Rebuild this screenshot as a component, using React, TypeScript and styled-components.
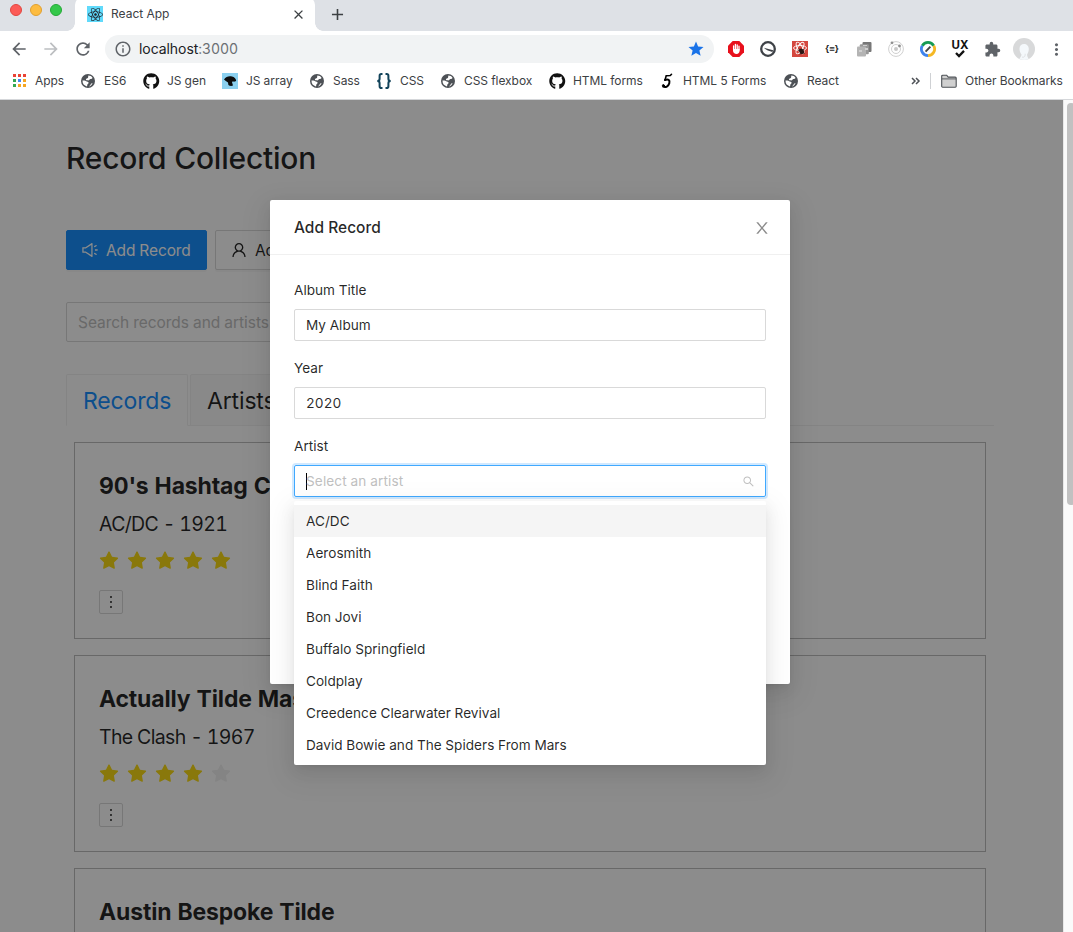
import React from 'react';
import styled, { createGlobalStyle } from 'styled-components';
import {
  MdAdd, MdArrowBack, MdArrowForward, MdClose, MdExtension, MdInfoOutline,
  MdMoreVert, MdRefresh, MdStar,
} from 'react-icons/md';
import { FaGithub, FaReact } from 'react-icons/fa';
import {
  AiFillStar, AiOutlineMore, AiOutlineSearch, AiOutlineSound, AiOutlineUser,
} from 'react-icons/ai';

const GlobalStyle = createGlobalStyle`
  *, *::before, *::after { box-sizing: border-box; }
  body {
    margin: 0;
    overflow: hidden;
    background: #fff;
    font-family: Inter, "Liberation Sans", sans-serif;
    font-variant-numeric: tabular-nums;
    color: rgba(0, 0, 0, 0.85);
  }
  h1, h2, p { margin: 0; }
  svg { display: block; flex: none; }
`;

const Window = styled.div`
  width: 1073px;
  height: 932px;
  display: flex;
  flex-direction: column;
  overflow: hidden;
`;

/* ---------- browser chrome ---------- */

const TabStrip = styled.div`
  height: 31px;
  flex: none;
  display: flex;
  background: #dee1e6;
  overflow: hidden;
`;

const Lights = styled.div`
  width: 75px;
  padding: 4px 0 0 10px;
  display: flex;
  gap: 8px;
`;

const Light = styled.span<{ $fill: string; $edge: string }>`
  width: 12px;
  height: 12px;
  border-radius: 50%;
  background: ${(p) => p.$fill};
  border: 1px solid ${(p) => p.$edge};
`;

const BrowserTab = styled.div`
  position: relative;
  width: 240px;
  height: 34px;
  margin-top: -3px;
  padding: 0 9px 0 12px;
  display: flex;
  align-items: center;
  background: #fff;
  border-radius: 8px 8px 0 0;
  font-size: 12px;
  color: #3c4043;

  &::before, &::after {
    content: "";
    position: absolute;
    bottom: 0;
    width: 8px;
    height: 8px;
  }
  &::before {
    left: -8px;
    background: radial-gradient(circle at 0 0, transparent 7.5px, #fff 8px);
  }
  &::after {
    right: -8px;
    background: radial-gradient(circle at 100% 0, transparent 7.5px, #fff 8px);
  }
`;

const Favicon = styled.span`
  width: 16px;
  height: 16px;
  margin-right: 8px;
  display: grid;
  place-items: center;
  background: #61dafb;
  color: #20232a;
`;

const TabTitle = styled.span`
  flex: 1;
  padding-bottom: 2px;
  letter-spacing: 0;
`;

const NewTab = styled.div`
  padding: 5px 0 0 13px;
  color: #3c4043;
`;

const Toolbar = styled.div`
  height: 36px;
  flex: none;
  display: flex;
  align-items: center;
  background: #fff;
  color: #5f6368;
`;

const NavButtons = styled.div`
  width: 105px;
  padding-left: 9px;
  display: flex;
  gap: 12px;
`;

const Faded = styled.span`
  color: #bcbec1;
`;

const AddressBar = styled.div`
  width: 609px;
  height: 28px;
  padding: 0 9px;
  display: flex;
  align-items: center;
  border-radius: 14px;
  background: #f1f3f4;
  font-size: 14px;
  letter-spacing: -0.06px;
`;

const Url = styled.span`
  flex: 1;
  padding: 0 0 1px 7px;
  color: #202124;
`;

const Port = styled.span`
  color: #6b6f73;
`;

const Extensions = styled.div`
  padding-left: 6px;
  display: flex;
`;

const Extension = styled.span`
  width: 32px;
  height: 28px;
  display: grid;
  place-items: center;
`;

const UxMark = styled.span`
  display: flex;
  flex-direction: column;
  align-items: center;
  font-size: 11.5px;
  font-weight: 700;
  line-height: 9px;
  color: #111;
`;

const Braces = styled.span<{ $size: number; $color: string }>`
  font-size: ${(p) => p.$size}px;
  font-weight: 700;
  line-height: 1;
  white-space: nowrap;
  color: ${(p) => p.$color};
`;

const Bookmarks = styled.div`
  height: 33px;
  flex: none;
  padding-left: 11px;
  padding-bottom: 5px;
  display: flex;
  align-items: center;
  background: #fff;
  border-bottom: 1px solid #d5d7da;
  font-size: 12px;
  color: #3c4043;
`;

const Bookmark = styled.span<{ $width?: number }>`
  width: ${(p) => (p.$width ? `${p.$width}px` : 'auto')};
  display: flex;
  align-items: center;
  gap: 8px;
  white-space: nowrap;
  letter-spacing: -0.05px;
`;

const BookmarkIcon = styled.span`
  width: 16px;
  height: 16px;
  display: grid;
  place-items: center;
  color: #4d5156;
`;

const AppsGrid = styled.span`
  display: grid;
  grid-template-columns: repeat(3, 3px);
  gap: 2px;
`;

const AppDot = styled.i<{ $color: string }>`
  height: 3px;
  background: ${(p) => p.$color};
`;

const Divider = styled.span`
  width: 1px;
  height: 16px;
  margin: 0 10px 0 9px;
  background: #cfd1d4;
`;

/* ---------- page ---------- */

const Viewport = styled.div`
  flex: 1;
  min-height: 0;
  display: flex;
`;

const Page = styled.div`
  position: relative;
  flex: 1;
  min-width: 0;
  overflow: hidden;
`;

const ScrollTrack = styled.div`
  width: 10px;
  padding: 3px 0 0 3px;
  background: #fafafa;
  border-left: 1px solid #e8e8e8;
  overflow: hidden;
`;

const ScrollThumb = styled.div`
  width: 8px;
  height: 402px;
  border-radius: 4px;
  background: #c1c1c1;
`;

const Content = styled.main`
  width: 1060px;
  padding: 34px 66px 0;
`;

const PageTitle = styled.h1`
  height: 96px;
  font-size: 30px;
  line-height: 48px;
  font-weight: 500;
  letter-spacing: -0.22px;
`;

const Actions = styled.div`
  display: flex;
  gap: 8px;
`;

const ActionButton = styled.button<{ $primary?: boolean }>`
  width: 141px;
  height: 40px;
  padding: 0 14px;
  display: flex;
  align-items: center;
  gap: 7px;
  border: 1px solid ${(p) => (p.$primary ? '#1890ff' : '#d9d9d9')};
  border-radius: 2px;
  background: ${(p) => (p.$primary ? '#1890ff' : '#fff')};
  color: ${(p) => (p.$primary ? '#fff' : 'rgba(0,0,0,.85)')};
  box-shadow: 0 2px 0 rgba(0, 0, 0, 0.03);
  font: inherit;
  font-size: 15.5px;
  letter-spacing: -0.12px;
  white-space: nowrap;
`;

const SearchBox = styled.div`
  width: 400px;
  height: 40px;
  margin-top: 32px;
  padding: 0 11px;
  border: 1px solid #d9d9d9;
  border-radius: 2px;
  font-size: 15.5px;
  line-height: 40px;
  letter-spacing: -0.05px;
  color: #bfbfbf;
`;

const Tabs = styled.div`
  height: 52px;
  margin-top: 32px;
  display: flex;
  gap: 2px;
  box-shadow: inset 0 -1px #f0f0f0;
`;

const Tab = styled.div<{ $active?: boolean }>`
  padding: 0 16px;
  width: 122px;
  border: 1px solid #f0f0f0;
  border-bottom-color: ${(p) => (p.$active ? '#fff' : '#f0f0f0')};
  border-radius: 2px 2px 0 0;
  background: ${(p) => (p.$active ? '#fff' : '#fafafa')};
  color: ${(p) => (p.$active ? '#1890ff' : 'rgba(0,0,0,.85)')};
  font-size: 23px;
  line-height: 52px;
  letter-spacing: -0.15px;
`;

const Cards = styled.div`
  padding: 16px 8px 0;
  display: flex;
  flex-direction: column;
  gap: 16px;
`;

const Card = styled.article`
  height: 197px;
  padding: 24px;
  border: 1px solid #bdbdbd;
`;

const CardTitle = styled.h2`
  font-size: 23px;
  line-height: 38px;
  font-weight: 700;
  letter-spacing: -0.16px;
  white-space: nowrap;
`;

const CardSubtitle = styled.p`
  font-size: 19.5px;
  line-height: 38px;
  letter-spacing: -0.65px;
`;

const Stars = styled.div`
  height: 47px;
  padding-top: 8px;
  display: flex;
  gap: 8px;
`;

const StarSlot = styled.span<{ $on: boolean }>`
  width: 20px;
  height: 20px;
  display: flex;
  align-items: center;
  justify-content: center;
  color: ${(p) => (p.$on ? '#fadb14' : '#f0f0f0')};
`;

const MoreButton = styled.button`
  width: 24px;
  height: 24px;
  padding: 0;
  display: flex;
  align-items: center;
  justify-content: center;
  border: 1px solid #d9d9d9;
  border-radius: 2px;
  background: #fff;
  color: rgba(0, 0, 0, 0.85);
`;

/* ---------- dialog ---------- */

const floatShadow = `
  0 3px 6px -4px rgba(0,0,0,.12),
  0 6px 16px 0 rgba(0,0,0,.08),
  0 9px 28px 8px rgba(0,0,0,.05)`;

const Mask = styled.div`
  position: absolute;
  inset: 0;
  padding: 100px 3px 0 0;
  display: flex;
  justify-content: center;
  align-items: flex-start;
  background: rgba(0, 0, 0, 0.45);
`;

const Dialog = styled.section`
  width: 520px;
  height: 484px;
  background: #fff;
  border-radius: 2px;
  box-shadow: ${floatShadow};
`;

const DialogHeader = styled.header`
  height: 55px;
  padding: 0 19px 0 24px;
  display: flex;
  align-items: center;
  justify-content: space-between;
  border-bottom: 1px solid #f0f0f0;
  font-size: 15.5px;
  font-weight: 500;
`;

const CloseIcon = styled.span`
  padding-top: 2px;
  color: #8c8c8c;
`;

const Form = styled.form`
  padding: 24px;
  display: flex;
  flex-direction: column;
  gap: 16px;
  font-size: 13.6px;
  letter-spacing: 0.02px;
`;

const Field = styled.div`
  position: relative;
  display: flex;
  flex-direction: column;
`;

const Label = styled.label`
  height: 30px;
  line-height: 23px;
`;

const Control = styled.div<{ $focused?: boolean }>`
  height: 32px;
  padding: 0 10px 0 11px;
  display: flex;
  align-items: center;
  border: 1px solid ${(p) => (p.$focused ? '#40a9ff' : '#d9d9d9')};
  border-radius: 2px;
  box-shadow: ${(p) => (p.$focused ? '0 0 0 2px rgba(24,144,255,.2)' : 'none')};
`;

const Caret = styled.span`
  width: 1px;
  height: 17px;
  margin-right: -1px;
  background: #000;
`;

const Placeholder = styled.span`
  flex: 1;
  letter-spacing: 0.12px;
  color: #bfbfbf;
`;

const SearchGlyph = styled.span`
  padding-top: 1px;
  color: #bfbfbf;
`;

const Menu = styled.ul`
  position: absolute;
  top: 66px;
  left: 0;
  width: 472px;
  margin: 0;
  padding: 4px 0;
  list-style: none;
  background: #fff;
  border-radius: 2px;
  box-shadow: ${floatShadow};
`;

const Option = styled.li<{ $active?: boolean }>`
  height: 32px;
  padding: 0 12px;
  line-height: 32px;
  background: ${(p) => (p.$active ? '#f5f5f5' : 'transparent')};
`;

const CloseGlyph = () => (
  <svg width="18" height="18" viewBox="0 0 1024 1024" fill="currentColor">
    <path d="M563.8 512l262.5-312.900c4.400-5.200.7-13.100-6.100-13.100h-79.800c-4.700 0-9.200 2.100-12.300 5.700L511.600 449.800 295.100 191.700c-3-3.600-7.500-5.700-12.300-5.700H203c-6.800 0-10.500 7.900-6.100 13.100L459.400 512 196.900 824.900A7.950 7.950 0 0 0 203 838h79.800c4.700 0 9.200-2.100 12.300-5.700l216.500-258.100 216.500 258.100c3 3.600 7.500 5.700 12.300 5.700h79.800c6.800 0 10.500-7.900 6.100-13.100L563.800 512z" />
  </svg>
);

const StopHandIcon = () => (
  <svg width="16" height="16" viewBox="0 0 16 16">
    <path d="M4.7 0h6.6L16 4.7v6.6L11.3 16H4.7L0 11.3V4.7z" fill="#e8101c" />
    <path d="M5.6 8.8V4.9M7.4 8V3.5M9.2 8V3.8M11 9V5.2" stroke="#fff" strokeWidth="1.3" strokeLinecap="round" />
    <path d="M5 8h6.6v1.8c0 2-1.2 3.2-3 3.2C6.500 13 5 11.600 5 9.800z" fill="#fff" />
  </svg>
);

const DialIcon = () => (
  <svg width="16" height="16" viewBox="0 0 16 16" fill="none">
    <circle cx="8" cy="8" r="6.800" stroke="#3e4247" strokeWidth="2.300" />
    <path d="M3.800 6.800l9.400 2.400-.8 1.700C9.500 10.500 6 9 3.800 6.800z" fill="#3e4247" />
  </svg>
);

const RedReactIcon = () => (
  <svg width="16" height="16" viewBox="0 0 16 16">
    <path d="M0 0h16v16H0z" fill="#d4473e" />
    <g fill="none" stroke="#fff" strokeWidth="0.9">
      <ellipse cx="8" cy="7" rx="6.500" ry="2.500" />
      <ellipse cx="8" cy="7" rx="6.500" ry="2.500" transform="rotate(60 8 7)" />
      <ellipse cx="8" cy="7" rx="6.500" ry="2.500" transform="rotate(120 8 7)" />
    </g>
    <ellipse cx="9.600" cy="10.300" rx="2.300" ry="2.900" fill="#2a1613" transform="rotate(-30 9.600 10.300)" />
    <path d="M6 9l6.500 3.500M8 13.500l4-5.500M7 7.500l1.500 1.500" stroke="#2a1613" strokeWidth="0.9" />
  </svg>
);

const StackIcon = () => (
  <svg width="16" height="16" viewBox="0 0 16 16">
    <rect x="6.500" y="1" width="9" height="10" rx="1" fill="#777" />
    <rect x="3.800" y="3.200" width="9" height="10" rx="1" fill="#989898" />
    <rect x="1" y="5.500" width="9" height="10" rx="1" fill="#b4b4b4" />
    <path d="M3 9h3v2H3zM7 4h4v1H7zM9 7h3v2H9z" fill="#d0d0d0" />
  </svg>
);

const OrbitIcon = () => (
  <svg width="16" height="16" viewBox="0 0 16 16" fill="none">
    <circle cx="8" cy="8" r="7.400" stroke="#d0d0d0" strokeWidth="1" />
    <circle cx="8" cy="8" r="4.500" stroke="#d0d0d0" strokeWidth="1" />
    <circle cx="8" cy="8" r="2" fill="#c8c8c8" />
    <circle cx="4" cy="1.800" r="1.400" fill="#909090" />
    <circle cx="11.500" cy="5" r="1.400" fill="#8c8c8c" />
  </svg>
);

const RingPencilIcon = () => (
  <svg width="16" height="16" viewBox="0 0 16 16" fill="none" strokeWidth="2.800">
    <path d="M2.300 4.700a6.600 6.600 0 0 1 11.400 0" stroke="#169b54" />
    <path d="M13.700 4.700A6.600 6.600 0 0 1 8 14.600" stroke="#f5b824" />
    <path d="M8 14.600A6.600 6.600 0 0 1 2.300 4.700" stroke="#3f83ec" />
    <path d="M5.600 10.600l4.800-5" stroke="#444" strokeWidth="2" />
  </svg>
);

const AvatarIcon = () => (
  <svg width="22" height="22" viewBox="0 0 22 22">
    <circle cx="11" cy="11" r="11" fill="#d8d9da" />
    <path d="M6.500 20.800c1-2 2-2.800 2-4.300-1.300-1.500-2-3.600-2-5.700C6.500 7.800 8.300 6 11 6s4.800 2 4.800 5c0 2.200-.8 4.200-1.700 5.400 0 1.600.6 2.800 1.600 4.500a11 11 0 0 1-9.200 0z" fill="#f4f8fb" />
    <path d="M9 19c2 1 3.500-1 3.200-3.200" stroke="#dfe2e5" fill="none" />
  </svg>
);

const HeadIcon = () => (
  <svg width="16" height="16" viewBox="0 0 16 16">
    <path d="M0 0h16v16H0z" fill="#8bd0ef" />
    <path d="M2 6.500C4 3.200 7.500 2.700 10 3.500c2.200.4 4 2 4.200 4.500L12 8.700l-1.200-.5-.8 1 1 3.400c-1.800.7-3.600.3-4.600-.7L6 9.600 3.800 8z" fill="#0c0c0c" />
  </svg>
);

const FolderIcon = () => (
  <svg width="16" height="14" viewBox="0 0 16 14">
    <path d="M.7 12.300V2.200c0-.6.4-1 1-1h4l1.500 1.900h7c.6 0 1 .4 1 1v8.200c0 .5-.3.900-.9.900H1.600c-.5 0-.9-.4-.9-.9z" fill="#d0d0d0" stroke="#4d5156" strokeWidth="1.100" />
    <path d="M1 4.900h14" stroke="#4d5156" strokeWidth="0.900" />
  </svg>
);

const FiveIcon = () => (
  <svg width="12" height="16" viewBox="0 0 12 16" fill="none" stroke="#000" strokeLinecap="round">
    <path d="M10.500 1.300L9.300 2.500 5.200 2.800 4 7" strokeWidth="1.600" />
    <path d="M4 7C7 5.600 9.200 7 8.300 10.300 7.500 13.300 4.600 14.800 2.200 13.700" strokeWidth="2" />
    <circle cx="2.400" cy="12.600" r="1" fill="#000" />
  </svg>
);

const CurlyIcon = () => (
  <svg width="16" height="16" viewBox="0 0 16 16" fill="none" stroke="#12435a" strokeWidth="2">
    <path d="M6.500 1H5.300C4 1 3.600 1.700 3.600 2.800v3C3.600 7.200 2.900 8 1.300 8c1.600 0 2.300.8 2.300 2.200v3c0 1.100.4 1.800 1.700 1.800h1.200" />
    <path d="M9.500 1h1.200c1.300 0 1.700.7 1.700 1.800v3c0 1.400.7 2.200 2.300 2.200-1.600 0-2.300.8-2.300 2.200v3c0 1.100-.4 1.800-1.700 1.800H9.500" />
  </svg>
);

const Globe = () => (
  <svg width="14" height="14" viewBox="0 0 14 14">
    <circle cx="7" cy="7" r="7" fill="#4d5156" />
    <path d="M7.300 1.600c1.900 0 3.300.8 4.200 2.200-.3 1-1.100 1.300-2.100 1.300-.9 0-.8.900-1.500 1.200-.8.300-1.300-.3-2.300-.1-.8.100-.9-.8-.3-1.400.6-.6 1.600-.3 1.800-1.200z" fill="#fff" />
    <path d="M1.500 6.600c1.700-.2 3.300.2 4.100 1 .9.300 1.900.2 2 1.200 0 .8-.8 1.100-1.200 1.600-.4.700.1 1.500-.5 2C3.200 11.900 1.400 9.700 1.500 6.600z" fill="#fff" />
    <path d="M8.200 12.400c.2-1 1-1.200 1.400-2 .3-.8 1-1.200 2-1.100-.7 1.600-1.900 2.700-3.400 3.100z" fill="#fff" />
  </svg>
);

const Github = () => <FaGithub size={16.500} color="#111" />;

const appColors = ['#ea4335', '#ea4335', '#ea4335', '#34a853', '#4285f4', '#f5a623', '#34a853', '#f5a623', '#f5a623'];

const AppsIcon = () => (
  <AppsGrid>
    {appColors.map((color, i) => <AppDot key={i} $color={color} />)}
  </AppsGrid>
);

const bookmarks = [
  { label: 'Apps', width: 69, icon: <AppsIcon /> },
  { label: 'ES6', width: 63, icon: <Globe /> },
  { label: 'JS gen', width: 79, icon: <Github /> },
  { label: 'JS array', width: 87, icon: <HeadIcon /> },
  { label: 'Sass', width: 67, icon: <Globe /> },
  { label: 'CSS', width: 64, icon: <CurlyIcon /> },
  { label: 'CSS flexbox', width: 109, icon: <Globe /> },
  { label: 'HTML forms', width: 110, icon: <Github /> },
  { label: 'HTML 5 Forms', width: 124, icon: <FiveIcon /> },
  { label: 'React', width: 128, icon: <Globe /> },
];

const records = [
  { title: "90's Hashtag Chic", subtitle: 'AC/DC - 1921', rating: 5 },
  { title: 'Actually Tilde Master', subtitle: 'The Clash - 1967', rating: 4 },
  { title: 'Austin Bespoke Tilde', subtitle: '', rating: 3 },
];

const artists = [
  'AC/DC', 'Aerosmith', 'Blind Faith', 'Bon Jovi', 'Buffalo Springfield',
  'Coldplay', 'Creedence Clearwater Revival', 'David Bowie and The Spiders From Mars',
];

const BrowserChrome = () => (
  <>
    <TabStrip>
      <Lights>
        <Light $fill="#fc5b57" $edge="#e2463f" />
        <Light $fill="#fdbc40" $edge="#e0a030" />
        <Light $fill="#34c84a" $edge="#24a936" />
      </Lights>
      <BrowserTab>
        <Favicon><FaReact size={15} /></Favicon>
        <TabTitle>React App</TabTitle>
        <MdClose size={15} />
      </BrowserTab>
      <NewTab><MdAdd size={19} /></NewTab>
    </TabStrip>
    <Toolbar>
      <NavButtons>
        <MdArrowBack size={20} />
        <Faded><MdArrowForward size={20} /></Faded>
        <MdRefresh size={20} />
      </NavButtons>
      <AddressBar>
        <MdInfoOutline size={18} />
        <Url>localhost<Port>:3000</Port></Url>
        <MdStar size={18} color="#1a73e8" />
      </AddressBar>
      <Extensions>
        <Extension><StopHandIcon /></Extension>
        <Extension><DialIcon /></Extension>
        <Extension><RedReactIcon /></Extension>
        <Extension><Braces $size={9.500} $color="#222">{'{≡}'}</Braces></Extension>
        <Extension><StackIcon /></Extension>
        <Extension><OrbitIcon /></Extension>
        <Extension><RingPencilIcon /></Extension>
        <Extension>
          <UxMark>
            UX
            <svg width="10" height="8" viewBox="0 0 10 8" fill="none">
              <path d="M1 3l3 3L9 .9" stroke="#111" strokeWidth="2.300" />
            </svg>
          </UxMark>
        </Extension>
        <Extension><MdExtension size={17} /></Extension>
        <Extension><AvatarIcon /></Extension>
        <Extension><MdMoreVert size={19} /></Extension>
      </Extensions>
    </Toolbar>
    <Bookmarks>
      {bookmarks.map((b) => (
        <Bookmark key={b.label} $width={b.width}>
          <BookmarkIcon>{b.icon}</BookmarkIcon>
          {b.label}
        </Bookmark>
      ))}
      <svg width="10" height="8" viewBox="0 0 10 8" fill="none" stroke="#4d5156" strokeWidth="1.500">
        <path d="M1 1l3 3-3 3M5 1l3 3-3 3" />
      </svg>
      <Divider />
      <Bookmark>
        <BookmarkIcon><FolderIcon /></BookmarkIcon>
        Other Bookmarks
      </Bookmark>
    </Bookmarks>
  </>
);

const RecordCard = ({ title, subtitle, rating }: { title: string; subtitle: string; rating: number }) => (
  <Card>
    <CardTitle>{title}</CardTitle>
    <CardSubtitle>{subtitle}</CardSubtitle>
    <Stars>
      {[1, 2, 3, 4, 5].map((n) => (
        <StarSlot key={n} $on={n <= rating}><AiFillStar size={22} /></StarSlot>
      ))}
    </Stars>
    <MoreButton type="button"><AiOutlineMore size={18} /></MoreButton>
  </Card>
);

const AddRecordDialog = () => (
  <Mask>
    <Dialog>
      <DialogHeader>
        Add Record
        <CloseIcon><CloseGlyph /></CloseIcon>
      </DialogHeader>
      <Form>
        <Field>
          <Label>Album Title</Label>
          <Control>My Album</Control>
        </Field>
        <Field>
          <Label>Year</Label>
          <Control>2020</Control>
        </Field>
        <Field>
          <Label>Artist</Label>
          <Control $focused>
            <Caret />
            <Placeholder>Select an artist</Placeholder>
            <SearchGlyph><AiOutlineSearch size={13} /></SearchGlyph>
          </Control>
          <Menu>
            {artists.map((name, i) => <Option key={name} $active={i === 0}>{name}</Option>)}
          </Menu>
        </Field>
      </Form>
    </Dialog>
  </Mask>
);

export default function App() {
  return (
    <>
      <GlobalStyle />
      <Window>
        <BrowserChrome />
        <Viewport>
          <Page>
            <Content>
              <PageTitle>Record Collection</PageTitle>
              <Actions>
                <ActionButton $primary><AiOutlineSound size={18} />Add Record</ActionButton>
                <ActionButton><AiOutlineUser size={18} />Add Artist</ActionButton>
              </Actions>
              <SearchBox>Search records and artists</SearchBox>
              <Tabs>
                <Tab $active>Records</Tab>
                <Tab>Artists</Tab>
              </Tabs>
              <Cards>
                {records.map((r) => <RecordCard key={r.title} {...r} />)}
              </Cards>
            </Content>
            <AddRecordDialog />
          </Page>
          <ScrollTrack><ScrollThumb /></ScrollTrack>
        </Viewport>
      </Window>
    </>
  );
}
